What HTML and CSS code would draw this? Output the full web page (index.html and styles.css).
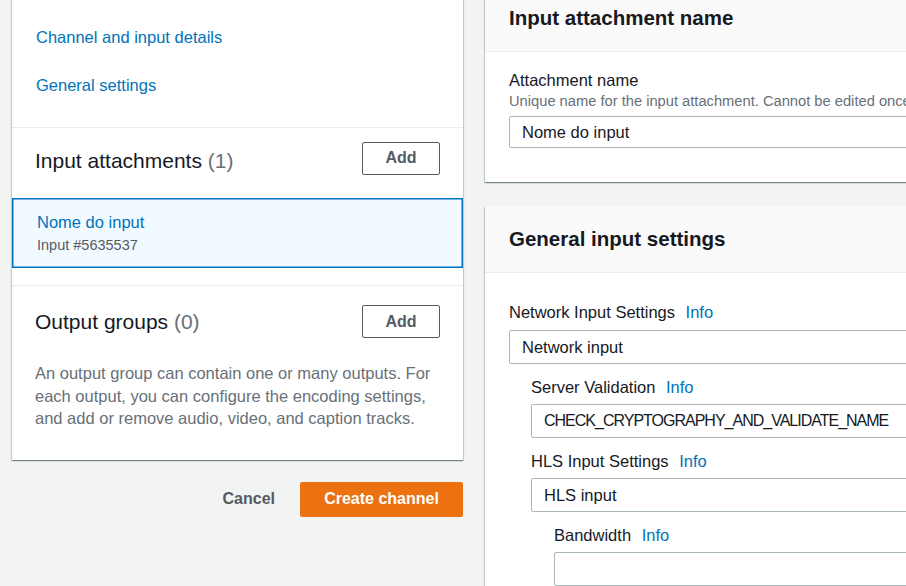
FILE: index.html
```html
<!DOCTYPE html>
<html lang="en">
<head>
<meta charset="utf-8">
<title>Create channel</title>
<link rel="stylesheet" href="styles.css">
</head>
<body>
<div class="page">
  <div class="left-col">
    <div class="panel nav-panel">
      <div class="nav-section">
        <a class="nav-link" href="#">Channel and input details</a>
        <a class="nav-link" href="#">General settings</a>
      </div>
      <div class="group-section attach-section">
        <div class="group-head">
          <h2 class="group-title">Input attachments <span class="count">(1)</span></h2>
          <button class="btn-normal" type="button">Add</button>
        </div>
        <div class="attach-item">
          <div class="attach-name">Nome do input</div>
          <div class="attach-id">Input #5635537</div>
        </div>
      </div>
      <div class="group-section output-section">
        <div class="group-head">
          <h2 class="group-title">Output groups <span class="count">(0)</span></h2>
          <button class="btn-normal" type="button">Add</button>
        </div>
        <p class="group-desc">An output group can contain one or many outputs. For<br>each output, you can configure the encoding settings,<br>and add or remove audio, video, and caption tracks.</p>
      </div>
    </div>
    <div class="actions">
      <button class="btn-link" type="button">Cancel</button>
      <button class="btn-primary" type="button">Create channel</button>
    </div>
  </div>

  <div class="right-col">
    <section class="panel form-panel">
      <header class="panel-header"><h2>Input attachment name</h2></header>
      <div class="panel-body body-one">
        <div class="field-label">Attachment name</div>
        <div class="field-desc">Unique name for the input attachment. Cannot be edited once created.</div>
        <div class="input input-short">Nome do input</div>
      </div>
    </section>

    <section class="panel form-panel second-panel">
      <header class="panel-header"><h2>General input settings</h2></header>
      <div class="panel-body body-two">
        <div class="field-label">Network Input Settings <a class="info" href="#">Info</a></div>
        <div class="input">Network input</div>
        <div class="nested">
          <div class="field-label">Server Validation <a class="info" href="#">Info</a></div>
          <div class="input input-caps">CHECK_CRYPTOGRAPHY_AND_VALIDATE_NAME</div>
          <div class="field-label spaced">HLS Input Settings <a class="info" href="#">Info</a></div>
          <div class="input">HLS input</div>
          <div class="nested nested-two">
            <div class="field-label">Bandwidth <a class="info" href="#">Info</a></div>
            <div class="input"></div>
          </div>
        </div>
      </div>
    </section>
  </div>
</div>
</body>
</html>
```
FILE: styles.css
```css
* { box-sizing: border-box; }

html, body {
  margin: 0;
  padding: 0;
  background: #f2f3f3;
  overflow: hidden;
  height: 586px;
}

body {
  font-family: "Liberation Sans", Arial, sans-serif;
  font-size: 16.5px;
  line-height: 22px;
  color: #16191f;
}

.page {
  display: grid;
  grid-template-columns: 451px 640px;
  column-gap: 22px;
  margin: -15px 0 0 12px;
  align-items: start;
}

.panel {
  background: #ffffff;
  box-shadow: 0 1px 1px 0 rgba(0, 28, 36, 0.3),
              1px 1px 1px 0 rgba(0, 28, 36, 0.15),
              -1px 1px 1px 0 rgba(0, 28, 36, 0.15);
}

/* left column */
.nav-section {
  display: flex;
  flex-direction: column;
  gap: 26px;
  padding: 41px 24px 31px;
}

.nav-link {
  color: #0073bb;
  text-decoration: none;
  font-size: 16.5px;
  line-height: 22px;
}

.group-section {
  border-top: 1px solid #eaeded;
}

.attach-section { padding: 13px 0 17px; }
.output-section { padding: 19px 0 30px; }

.group-head {
  display: flex;
  align-items: center;
  justify-content: space-between;
  padding: 0 23px 0 23px;
}

.group-title {
  margin: 0;
  font-size: 21px;
  font-weight: 400;
  line-height: 28px;
  color: #16191f;
  padding-top: 6px;
}

.output-section .group-title { padding-top: 0; }

.count { color: #687078; }

.btn-normal {
  width: 78px;
  height: 33px;
  border: 1px solid #545b64;
  border-radius: 2px;
  background: #ffffff;
  color: #545b64;
  font-family: inherit;
  font-weight: 700;
  font-size: 16px;
  padding: 0;
}

.attach-item {
  margin-top: 23px;
  border: 1px solid #0073bb;
  box-shadow: inset 0 0 0 0.5px #0073bb;
  background: #f1faff;
  padding: 12px 24px 12px;
}

.attach-name {
  color: #0073bb;
  font-size: 16.5px;
  line-height: 22px;
}

.attach-id {
  margin-top: 2px;
  color: #545b64;
  font-size: 14.5px;
  line-height: 20px;
}

.group-desc {
  margin: 24px 0 0;
  padding: 0 23px;
  color: #687078;
  font-size: 16.5px;
  line-height: 22.5px;
}

.actions {
  display: flex;
  justify-content: flex-end;
  align-items: center;
  gap: 25px;
  margin-top: 22px;
}

.btn-link {
  border: 0;
  background: transparent;
  color: #545b64;
  font-family: inherit;
  font-weight: 700;
  font-size: 16px;
  padding: 0;
}

.btn-primary {
  width: 163px;
  height: 35px;
  border: 0;
  border-radius: 2px;
  background: #ec7211;
  color: #ffffff;
  font-family: inherit;
  font-weight: 700;
  font-size: 16px;
  padding: 0;
}

/* right column */
.second-panel { margin-top: 24px; }

.panel-header {
  background: #fafafa;
  border-bottom: 1px solid #eaeded;
  padding: 20px 24px;
}

.panel-header h2 {
  margin: 0;
  font-size: 20.5px;
  line-height: 26px;
  font-weight: 700;
  color: #16191f;
}

.panel-body { padding: 0 0 0 24px; }
.body-one { padding-top: 17px; padding-bottom: 34px; }
.body-two { padding-top: 28px; padding-bottom: 40px; }

.field-label {
  font-size: 16.5px;
  line-height: 22px;
  color: #16191f;
}

.field-label.spaced { margin-top: 12px; }

.info {
  color: #0073bb;
  text-decoration: none;
  margin-left: 6px;
}

.field-desc {
  font-size: 14.7px;
  line-height: 20px;
  color: #687078;
  white-space: nowrap;
}

.input {
  height: 34px;
  margin-top: 7px;
  border: 1px solid #aab7b8;
  border-radius: 2px;
  background: #ffffff;
  padding: 0 12px;
  font-size: 16.5px;
  line-height: 32px;
  color: #16191f;
  white-space: nowrap;
}

.input-short {
  height: 32px;
  margin-top: 5px;
  line-height: 30px;
}

.input-caps {
  font-size: 16px;
  letter-spacing: -1px;
}

.nested {
  margin-left: 22px;
  margin-top: 12px;
}

.nested .input { margin-top: 6px; }

.nested-two { margin-left: 23px; }
```
